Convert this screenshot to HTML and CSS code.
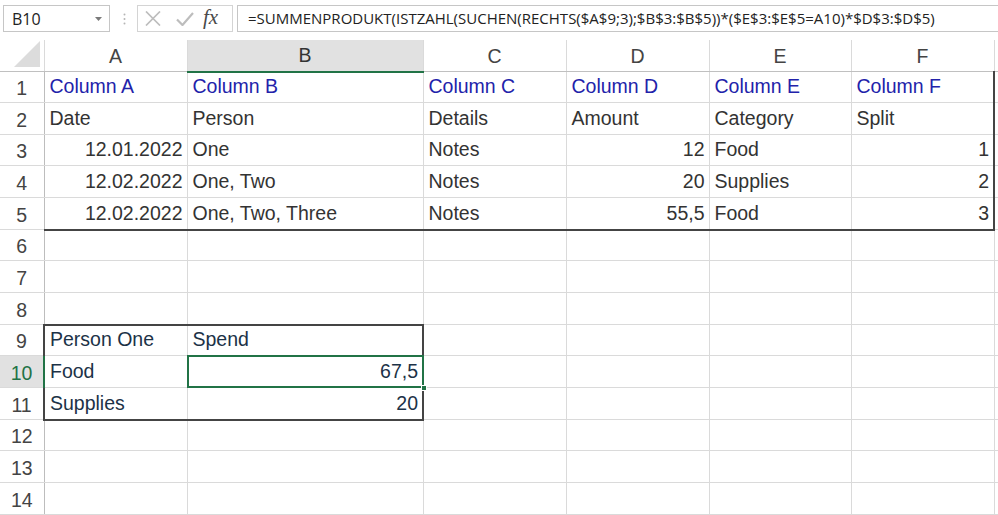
FILE: index.html
```html
<!DOCTYPE html>
<html>
<head>
<meta charset="utf-8">
<link rel="stylesheet" href="styles.css">
</head>
<body>
<div class="formula-bar">
  <div class="name-box"><span>B10</span><svg class="caret" width="7" height="4" viewBox="0 0 7 4"><path d="M0 0h7L3.5 4z" fill="#7a7a7a"/></svg></div>
  <svg class="grip" width="3" height="12" viewBox="0 0 3 12"><circle cx="1.5" cy="1.5" r="1" fill="#b5b5b5"/><circle cx="1.5" cy="6" r="1" fill="#b5b5b5"/><circle cx="1.5" cy="10.5" r="1" fill="#b5b5b5"/></svg>
  <div class="fx-box">
    <svg class="ico-x" width="16" height="15" viewBox="0 0 16 15"><path d="M1 0.5L15 14.5M15 0.5L1 14.5" stroke="#bdbdbd" stroke-width="1.7" fill="none"/></svg>
    <svg class="ico-check" width="18" height="14" viewBox="0 0 18 14"><path d="M1 7.5L6.5 13L17 1" stroke="#bdbdbd" stroke-width="2.2" fill="none"/></svg>
    <span class="fx">fx</span>
  </div>
  <div class="formula-input">=SUMMENPRODUKT(ISTZAHL(SUCHEN(RECHTS($A$9;3);$B$3:$B$5))*($E$3:$E$5=A10)*$D$3:$D$5)</div>
</div>
<table class="sheet">
  <colgroup>
    <col class="c-rh"><col class="c-a"><col class="c-b"><col class="c-c"><col class="c-d"><col class="c-e"><col class="c-f"><col class="c-g">
  </colgroup>
  <thead>
    <tr class="hdr">
      <th class="corner"><svg width="26" height="26" viewBox="0 0 26 26"><path d="M26 0V26H0z" fill="#dcdcdc"/></svg></th>
      <th>A</th><th class="sel">B</th><th>C</th><th>D</th><th>E</th><th>F</th><th class="last"></th>
    </tr>
  </thead>
  <tbody>
    <tr class="r31 blue"><th>1</th><td>Column A</td><td>Column B</td><td>Column C</td><td>Column D</td><td>Column E</td><td class="tr">Column F</td><td></td></tr>
    <tr class="r32"><th>2</th><td>Date</td><td>Person</td><td>Details</td><td>Amount</td><td>Category</td><td class="tr">Split</td><td></td></tr>
    <tr class="r31"><th>3</th><td class="num">12.01.2022</td><td>One</td><td>Notes</td><td class="num">12</td><td>Food</td><td class="num tr">1</td><td></td></tr>
    <tr class="r32"><th>4</th><td class="num">12.02.2022</td><td>One, Two</td><td>Notes</td><td class="num">20</td><td>Supplies</td><td class="num tr">2</td><td></td></tr>
    <tr class="r32 tb-all"><th>5</th><td class="num">12.02.2022</td><td>One, Two, Three</td><td>Notes</td><td class="num">55,5</td><td>Food</td><td class="num tr">3</td><td></td></tr>
    <tr class="r31"><th>6</th><td></td><td></td><td></td><td></td><td></td><td></td><td></td></tr>
    <tr class="r32"><th>7</th><td></td><td></td><td></td><td></td><td></td><td></td><td></td></tr>
    <tr class="r32 tb-ab"><th>8</th><td></td><td></td><td></td><td></td><td></td><td></td><td></td></tr>
    <tr class="r31 navy"><th>9</th><td class="bl">Person One</td><td class="br">Spend</td><td></td><td></td><td></td><td></td><td></td></tr>
    <tr class="r32 navy"><th class="rsel">10</th><td class="bl">Food</td><td class="num br active">67,5<span class="sel-box"></span><span class="handle"></span></td><td></td><td></td><td></td><td></td><td></td></tr>
    <tr class="r32 navy tb-ab"><th>11</th><td class="bl">Supplies</td><td class="num br">20</td><td></td><td></td><td></td><td></td><td></td></tr>
    <tr class="r31"><th>12</th><td></td><td></td><td></td><td></td><td></td><td></td><td></td></tr>
    <tr class="r32"><th>13</th><td></td><td></td><td></td><td></td><td></td><td></td><td></td></tr>
    <tr class="r32"><th>14</th><td></td><td></td><td></td><td></td><td></td><td></td><td></td></tr>
  </tbody>
</table>
</body>
</html>
```
FILE: styles.css
```css
html, body {
  margin: 0;
  padding: 0;
  background: #fff;
  overflow: hidden;
}

.formula-bar {
  display: flex;
  align-items: flex-start;
  height: 40px;
  box-sizing: border-box;
  padding: 5px 0 0 3px;
  background: #fff;
}

.name-box {
  width: 107px;
  height: 27px;
  box-sizing: border-box;
  border: 1px solid #c6c6c6;
  display: flex;
  align-items: center;
  justify-content: space-between;
  padding: 0 7px 0 8px;
  font: 16px "Open Sans", "Noto Sans", sans-serif;
  color: #222;
}

.grip {
  margin: 8px 11px 0 13px;
}

.fx-box {
  width: 96px;
  height: 27px;
  box-sizing: border-box;
  border: 1px solid #d4d4d4;
  display: flex;
  align-items: center;
  padding-left: 7px;
}

.ico-x { margin-right: 15px; }
.ico-check { margin-right: 9px; }

.fx {
  font: italic 21px "Liberation Serif", serif;
  color: #4a4a4a;
  margin-top: -3px;
}

.formula-input {
  margin-left: 4px;
  flex: 1;
  height: 27px;
  box-sizing: border-box;
  border: 1px solid #c6c6c6;
  border-right: none;
  padding-left: 10px;
  font: 15px "Open Sans", "Noto Sans", sans-serif;
  line-height: 25px;
  color: #222;
  white-space: nowrap;
}

.sheet {
  border-collapse: collapse;
  table-layout: fixed;
  width: 1024px;
  font: 19.5px "Liberation Sans", Arial, sans-serif;
  color: #333;
}

.c-rh { width: 44px; }
.c-a { width: 143px; }
.c-b { width: 236px; }
.c-c { width: 143px; }
.c-d { width: 143px; }
.c-e { width: 142px; }
.c-f { width: 143px; }
.c-g { width: 30px; }

.sheet th,
.sheet td {
  border: 1px solid #dadada;
  padding: 0 4px 6px 5px;
  white-space: nowrap;
  overflow: visible;
  vertical-align: bottom;
  line-height: 20px;
}

.sheet thead th {
  height: 27px;
  font-weight: normal;
  color: #444;
  text-align: center;
  vertical-align: middle;
  padding: 0;
  border-top: none;
  border-bottom: 1px solid #c0c0c0;
}

.sheet thead th.corner {
  text-align: right;
  vertical-align: bottom;
  padding: 0 4px 4px 0;
  line-height: 0;
  border-left: none;
}

.sheet thead th.sel {
  background: #e1e1e1;
  border-bottom: 2px solid #217346;
  color: #333;
}

.sheet tbody th {
  font-weight: normal;
  color: #444;
  text-align: center;
  padding: 0 0 4px 0;
  border-left: none;
  border-right: 1px solid #bdbdbd;
}

.sheet tbody th.rsel {
  background: #e1e1e1;
  color: #217346;
  border-right: 2px solid #217346;
}

.r31 { height: 31px; }
.r32 { height: 32px; }

.blue td { color: #2222aa; }
.navy td { color: #1c3247; }

.num { text-align: right; }

.sheet td.tr { border-right: 2px solid #444; }
.sheet tr.tb-all td:not(:last-child) { border-bottom: 2px solid #444; }
.sheet tr.tb-ab td:nth-of-type(1),
.sheet tr.tb-ab td:nth-of-type(2) { border-bottom: 2px solid #444; }
.sheet td.bl { border-left: 2px solid #444; }
.sheet td.br { border-right: 2px solid #444; }

.active {
  position: relative;
}

.sel-box {
  position: absolute;
  left: -1px;
  top: -1px;
  right: -2px;
  bottom: -1px;
  border: 2px solid #217346;
  pointer-events: none;
}

.handle {
  position: absolute;
  right: -5px;
  bottom: -4px;
  width: 6px;
  height: 6px;
  background: #217346;
  border: 1px solid #fff;
  box-sizing: border-box;
}
```
